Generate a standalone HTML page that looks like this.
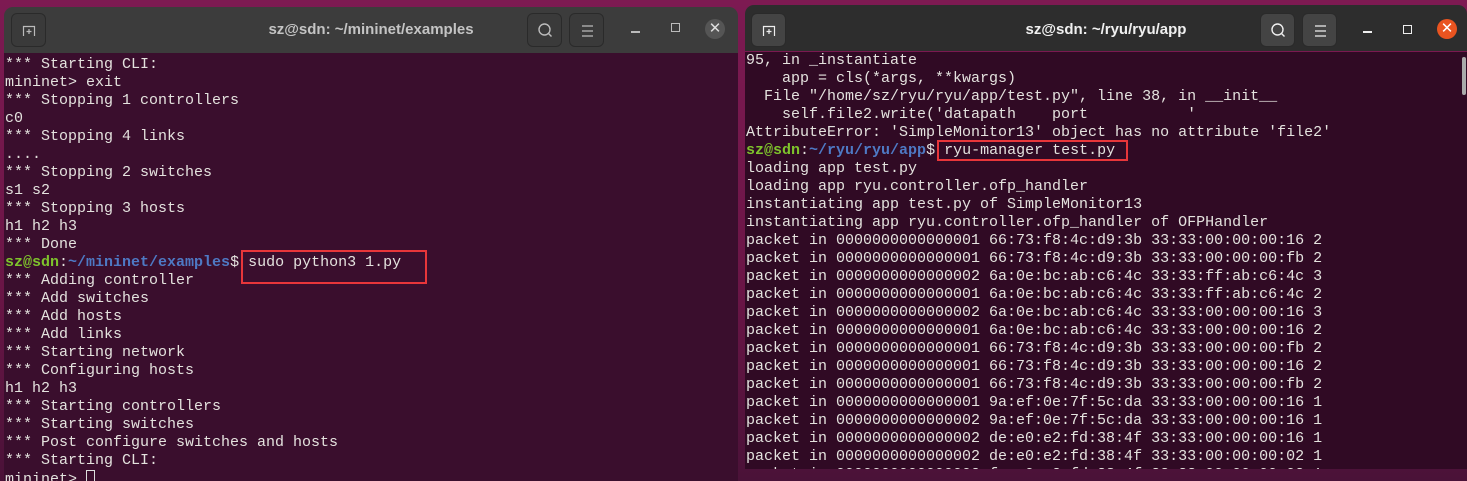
<!DOCTYPE html>
<html><head><meta charset="utf-8"><style>
*{margin:0;padding:0;box-sizing:border-box}
body{width:1467px;height:481px;overflow:hidden;background:linear-gradient(180deg,#7d1a52 0,#6a1546 60%,#4a1238 100%);position:relative;font-family:"Liberation Sans",sans-serif}
.win{position:absolute;overflow:hidden;border-radius:9px 9px 0 0}
.tb{position:absolute;left:0;right:0;top:0;height:46px}
.term{position:absolute;left:0;right:0;bottom:0;overflow:hidden}
pre{font-family:"Liberation Mono",monospace;font-size:15px;line-height:18px;color:#e4e2de;position:absolute;left:1px;white-space:pre}
.g{color:#7ec32c;font-weight:bold}.b{color:#4e79c4;font-weight:bold}
.btn{position:absolute;top:6px;width:35px;height:34px;border-radius:6px;border:1px solid #2a2a2a}
.title{position:absolute;top:0;height:46px;line-height:46px;font-weight:bold;font-size:15px;width:100%;text-align:center}
.red{position:absolute;border:2px solid #e8363a}
</style></head><body>

<!-- left window -->
<div class="win" style="left:4px;top:7px;width:734px;height:474px">
  <div class="tb" style="background:#3c3c3c">
    <div class="btn" style="left:7px;background:#3a3a3a"><svg width="35" height="34" viewBox="0 0 35 34"><path d="M11.5 22V12.5h11V22M14.5 17.5h5M17 15v5" stroke="#bbb" stroke-width="1.2" fill="none"/></svg></div>
    <div class="title" style="color:#c4c4c4;width:734px">sz@sdn: ~/mininet/examples</div>
    <div class="btn" style="left:523px;background:#3a3a3a"><svg width="35" height="34"><circle cx="16.5" cy="15.5" r="5.5" stroke="#bbb" stroke-width="1.4" fill="none"/><path d="M20.5 19.5l3 3" stroke="#bbb" stroke-width="1.4"/></svg></div>
    <div class="btn" style="left:565px;background:#3a3a3a"><svg width="35" height="34"><path d="M12 12h11M12 17h11M12 22h11" stroke="#bbb" stroke-width="1.2"/></svg></div>
    <div style="position:absolute;left:627px;top:24px;width:9px;height:1.5px;background:#bbb"></div>
    <div style="position:absolute;left:667px;top:16px;width:9px;height:9px;border:1.4px solid #bbb"></div>
    <div style="position:absolute;left:701px;top:12px;width:20px;height:20px;border-radius:50%;background:#555;color:#ddd;font-size:15px;line-height:20px;text-align:center">✕</div>
  </div>
  <div class="term" style="top:46px;background:#3a0e2d">
<pre style="top:3px">*** Starting CLI:
mininet> exit
*** Stopping 1 controllers
c0
*** Stopping 4 links
....
*** Stopping 2 switches
s1 s2
*** Stopping 3 hosts
h1 h2 h3
*** Done
<span class="g">sz@sdn</span>:<span class="b">~/mininet/examples</span>$ sudo python3 1.py
*** Adding controller
*** Add switches
*** Add hosts
*** Add links
*** Starting network
*** Configuring hosts
h1 h2 h3
*** Starting controllers
*** Starting switches
*** Post configure switches and hosts
*** Starting CLI:
mininet> <span style="display:inline-block;width:9px;height:16px;border:1px solid #ddd;vertical-align:-3px"></span></pre>
  </div>
</div>
<div class="red" style="left:241px;top:250px;width:186px;height:34px"></div>

<!-- right window -->
<div class="win" style="left:745px;top:5px;width:722px;height:464px">
  <div class="tb" style="background:#2d2d2d">
    <div class="btn" style="left:6px;top:8px;background:#444"><svg width="35" height="34" viewBox="0 0 35 34"><path d="M11.5 22V12.5h11V22M14.5 17.5h5M17 15v5" stroke="#eee" stroke-width="1.2" fill="none"/></svg></div>
    <div class="title" style="color:#f0f0f0;top:2px;left:0">sz@sdn: ~/ryu/ryu/app</div>
    <div class="btn" style="left:515px;top:8px;background:#444"><svg width="35" height="34"><circle cx="16.5" cy="15.5" r="5.5" stroke="#eee" stroke-width="1.4" fill="none"/><path d="M20.5 19.5l3 3" stroke="#eee" stroke-width="1.4"/></svg></div>
    <div class="btn" style="left:557px;top:8px;background:#444"><svg width="35" height="34"><path d="M12 12h11M12 17h11M12 22h11" stroke="#eee" stroke-width="1.2"/></svg></div>
    <div style="position:absolute;left:618px;top:26px;width:9px;height:1.5px;background:#eee"></div>
    <div style="position:absolute;left:658px;top:20px;width:9px;height:9px;border:1.4px solid #eee"></div>
    <div style="position:absolute;left:692px;top:14px;width:20px;height:20px;border-radius:50%;background:#e95420;color:#fff;font-size:15px;line-height:20px;text-align:center">✕</div>
  </div>
  <div class="term" style="top:47px;background:#300a24">
    <div style="position:absolute;right:1px;top:5px;width:4px;height:38px;background:#aaa;border-radius:2px"></div>
<pre style="top:0px">95, in _instantiate
    app = cls(*args, **kwargs)
  File "/home/sz/ryu/ryu/app/test.py", line 38, in __init__
    self.file2.write('datapath    port           '
AttributeError: 'SimpleMonitor13' object has no attribute 'file2'
<span class="g">sz@sdn</span>:<span class="b">~/ryu/ryu/app</span>$ ryu-manager test.py
loading app test.py
loading app ryu.controller.ofp_handler
instantiating app test.py of SimpleMonitor13
instantiating app ryu.controller.ofp_handler of OFPHandler
packet in 0000000000000001 66:73:f8:4c:d9:3b 33:33:00:00:00:16 2
packet in 0000000000000001 66:73:f8:4c:d9:3b 33:33:00:00:00:fb 2
packet in 0000000000000002 6a:0e:bc:ab:c6:4c 33:33:ff:ab:c6:4c 3
packet in 0000000000000001 6a:0e:bc:ab:c6:4c 33:33:ff:ab:c6:4c 2
packet in 0000000000000002 6a:0e:bc:ab:c6:4c 33:33:00:00:00:16 3
packet in 0000000000000001 6a:0e:bc:ab:c6:4c 33:33:00:00:00:16 2
packet in 0000000000000001 66:73:f8:4c:d9:3b 33:33:00:00:00:fb 2
packet in 0000000000000001 66:73:f8:4c:d9:3b 33:33:00:00:00:16 2
packet in 0000000000000001 66:73:f8:4c:d9:3b 33:33:00:00:00:fb 2
packet in 0000000000000001 9a:ef:0e:7f:5c:da 33:33:00:00:00:16 1
packet in 0000000000000002 9a:ef:0e:7f:5c:da 33:33:00:00:00:16 1
packet in 0000000000000002 de:e0:e2:fd:38:4f 33:33:00:00:00:16 1
packet in 0000000000000002 de:e0:e2:fd:38:4f 33:33:00:00:00:02 1
packet in 0000000000000002 fe:e0:e2:fd:38:4f 33:33:00:00:00:02 1</pre>
  </div>
</div>
<div class="red" style="left:937px;top:140px;width:191px;height:21px"></div>
</body></html>
